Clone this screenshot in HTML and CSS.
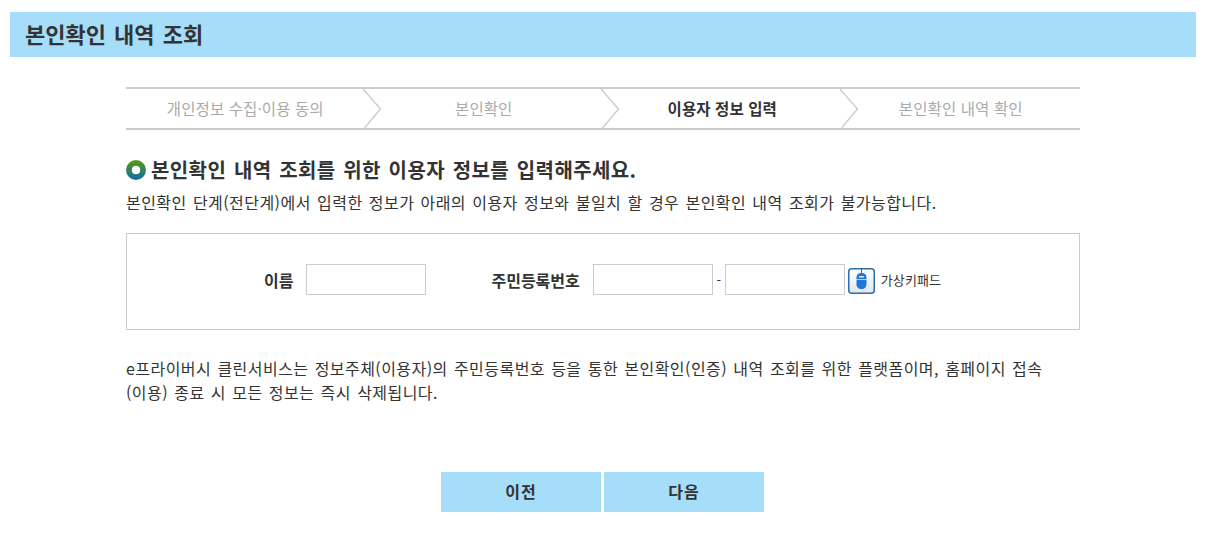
FILE: index.html
```html
<!DOCTYPE HTML>
<html lang="ko">
<head>
    <meta charset="UTF-8">
    <title>본인확인 내역 조회</title>
    <link rel="stylesheet" href="styles.css">
</head>
<body>
<div id="wrap">
    <h1 class="page_title">본인확인 내역 조회</h1>

    <div class="content">
        <ul class="steps">
            <li>개인정보 수집·이용 동의
                <svg class="chevron" width="20" height="39" viewBox="0 0 20 39"><path d="M1 0L18.5 20L2.5 39" fill="none" stroke="#ccc" stroke-width="1.4"/></svg>
            </li>
            <li>본인확인
                <svg class="chevron" width="20" height="39" viewBox="0 0 20 39"><path d="M1 0L18.5 20L2.5 39" fill="none" stroke="#ccc" stroke-width="1.4"/></svg>
            </li>
            <li class="on">이용자 정보 입력
                <svg class="chevron" width="20" height="39" viewBox="0 0 20 39"><path d="M1 0L18.5 20L2.5 39" fill="none" stroke="#ccc" stroke-width="1.4"/></svg>
            </li>
            <li>본인확인 내역 확인</li>
        </ul>

        <h2 class="sub_title"><span class="bullet"></span>본인확인 내역 조회를 위한 이용자 정보를 입력해주세요.</h2>
        <p class="sub_desc">본인확인 단계(전단계)에서 입력한 정보가 아래의 이용자 정보와 불일치 할 경우 본인확인 내역 조회가 불가능합니다.</p>

        <div class="form_box">
            <label class="form_label">이름</label>
            <input class="form_input" type="text">
            <label class="form_label label_jumin">주민등록번호</label>
            <input class="form_input" type="text">
            <span class="dash">-</span>
            <input class="form_input" type="text">
            <span class="keypad_btn">
                <svg width="27" height="26" viewBox="0 0 27 26">
                    <defs>
                        <linearGradient id="btnBg" x1="0" y1="0" x2="0" y2="1">
                            <stop offset="0" stop-color="#fff"/>
                            <stop offset="1" stop-color="#dfe6ec"/>
                        </linearGradient>
                    </defs>
                    <rect x="0.75" y="0.75" width="25.5" height="24.5" rx="3" fill="url(#btnBg)" stroke="#2d6ea8" stroke-width="1.5"/>
                    <path d="M13.5 1V6" stroke="#2d6ea8" stroke-width="1"/>
                    <rect x="8.5" y="5" width="10" height="16" rx="4.5" fill="#1f78d8"/>
                    <rect x="11" y="8" width="5" height="1.5" fill="#d8e8f8"/>
                    <path d="M8.5 11.5H18.5" stroke="#d8e8f8" stroke-width="0.8"/>
                </svg>
            </span>
            <span class="keypad_txt">가상키패드</span>
        </div>

        <p class="notice">e프라이버시 클린서비스는 정보주체(이용자)의 주민등록번호 등을 통한 본인확인(인증) 내역 조회를 위한 플랫폼이며, 홈페이지 접속<br>(이용) 종료 시 모든 정보는 즉시 삭제됩니다.</p>

        <div class="btns">
            <a class="btn">이전</a>
            <a class="btn">다음</a>
        </div>
    </div>
</div>
</body>
</html>
```

FILE: styles.css
```css
body{margin:0;background:#fff;color:#333;font-family:"Noto Sans CJK KR","Liberation Sans",sans-serif;}
h1,h2,p,ul,li{margin:0;padding:0;list-style:none;}

#wrap{
    width: 1186px;
    padding: 12px 9px 0 10px;
}
.page_title{
    height: 45px;
    padding-left: 15px;
    background: #a6ddf9;
    color: #333;
    font-size: 22px;
    font-weight: 700;
    line-height: 43px;
    word-spacing: 2px;
}
.content{
    width: 954px;
    margin: 30px 0 0 116px;
}
.steps{
    display: flex;
    height: 39px;
    border-top: 2px solid #ccc;
    border-bottom: 2px solid #ccc;
}
.steps li{
    position: relative;
    flex: 1;
    color: #aaa;
    font-size: 15.5px;
    line-height: 38px;
    letter-spacing: 0.1px;
    text-align: center;
}
.steps li.on{
    color: #333;
    font-weight: 700;
}
.chevron{
    position: absolute;
    top: 0;
    right: -17px;
}
.sub_title{
    display: flex;
    align-items: center;
    margin-top: 26px;
    height: 28px;
    color: #333;
    font-size: 20px;
    font-weight: 700;
    line-height: 28px;
    letter-spacing: 0.4px;
    word-spacing: 1.7px;
}
.bullet{
    flex: none;
    width: 20px;
    height: 20px;
    margin-right: 5px;
    border-radius: 50%;
    background: radial-gradient(circle, #fff 0 4px, transparent 4.6px), linear-gradient(#5a9a10, #0a6fa8);
}
.sub_desc{
    margin-top: 7px;
    font-size: 16px;
    line-height: 22px;
    letter-spacing: 0.45px;
    word-spacing: 1.3px;
}
.form_box{
    display: flex;
    align-items: center;
    height: 91px;
    margin-top: 20px;
    padding: 0 0 4px 137px;
    border: 1px solid #ccc;
}
.form_label{
    margin-right: 13px;
    color: #333;
    font-size: 16px;
    font-weight: 700;
}
.label_jumin{
    margin-left: 65px;
}
.form_input{
    width: 118px;
    height: 29px;
    padding: 0;
    border: 1px solid #ccc;
    background: #fff;
}
.dash{
    width: 12px;
    font-size: 13px;
    text-align: center;
}
.keypad_btn{
    display: flex;
    margin: 2px 0 0 3px;
}
.keypad_txt{
    margin-left: 6px;
    font-size: 13px;
    letter-spacing: 0.1px;
}
.notice{
    margin-top: 26px;
    font-size: 16px;
    line-height: 24px;
    letter-spacing: 0.45px;
    word-spacing: 1.3px;
}
.btns{
    display: flex;
    gap: 3px;
    margin-top: 68px;
    padding-left: 315px;
}
.btn{
    width: 160px;
    height: 40px;
    background: #a6ddf9;
    color: #333;
    font-size: 16px;
    font-weight: 700;
    line-height: 39px;
    letter-spacing: 1px;
    text-align: center;
}
```
